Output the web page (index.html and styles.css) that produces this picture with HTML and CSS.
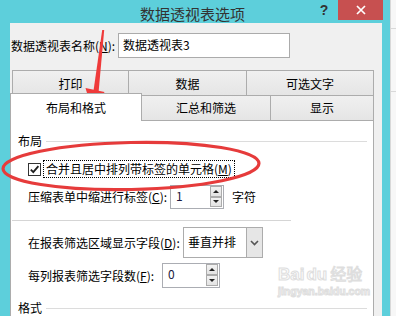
FILE: index.html
```html
<!DOCTYPE html>
<html lang="zh-CN">
<head>
<meta charset="utf-8">
<title>数据透视表选项</title>
<link rel="stylesheet" href="styles.css">
</head>
<body>
<div class="screen">
  <div class="dialog">
    <div class="titlebar">
      <div class="title">数据透视表选项</div>
      <div class="help">?</div>
      <div class="close">
        <svg width="10" height="10" viewBox="0 0 10 10"><path d="M1 1 L9 9 M9 1 L1 9" stroke="#fff" stroke-width="1.7" fill="none"/></svg>
      </div>
    </div>
    <div class="body">
      <div class="name-row">
        <div class="name-lbl">数据透视表名称(<u>N</u>):</div>
        <div class="textbox">数据透视表3</div>
      </div>
      <div class="tabs">
        <div class="tabrow back">
          <div class="tab tb1">打印</div>
          <div class="tab tb2">数据</div>
          <div class="tab tb3">可选文字</div>
        </div>
        <div class="tabrow front">
          <div class="tab tf1 active">布局和格式</div>
          <div class="tab tf2">汇总和筛选</div>
          <div class="tab tf3">显示</div>
        </div>
      </div>
      <div class="panel">
        <div class="group-head"><span>布局</span></div>
        <div class="row check-row">
          <div class="checkbox">
            <svg width="11" height="11" viewBox="0 0 11 11"><path d="M1.8 5.6 L4.3 8.2 L9.4 2.2" stroke="#1e1e1e" stroke-width="1.8" fill="none"/></svg>
          </div>
          <div class="focus-lbl">合并且居中排列带标签的单元格(<u>M</u>)</div>
        </div>
        <div class="row compress-row">
          <div class="lbl lbl-c">压缩表单中缩进行标签(<u>C</u>):</div>
          <div class="spin spin-c">
            <div class="spin-field">1</div>
            <div class="spin-btns">
              <div class="spin-btn"><span class="tri up"></span></div>
              <div class="spin-btn"><span class="tri down"></span></div>
            </div>
          </div>
          <div class="unit">字符</div>
        </div>
        <div class="separator"></div>
        <div class="row filter-row">
          <div class="lbl lbl-d">在报表筛选区域显示字段(<u>D</u>):</div>
          <div class="combo">
            <div class="combo-field">垂直并排</div>
            <div class="combo-btn">
              <svg width="9" height="6" viewBox="0 0 9 6"><path d="M1 1 L4.5 4.5 L8 1" stroke="#555" stroke-width="1.6" fill="none"/></svg>
            </div>
          </div>
        </div>
        <div class="row percol-row">
          <div class="lbl lbl-f">每列报表筛选字段数(<u>F</u>):</div>
          <div class="spin spin-f">
            <div class="spin-field">0</div>
            <div class="spin-btns">
              <div class="spin-btn"><span class="tri up"></span></div>
              <div class="spin-btn"><span class="tri down"></span></div>
            </div>
          </div>
        </div>
        <div class="group-head group-fmt"><span>格式</span></div>
      </div>
    </div>
  </div>
  <div class="behind"></div>

  <div class="watermark">
    <div class="wm-top"><span class="wm-bai">Bai</span><span class="wm-du">du</span><span class="wm-jy">经验</span></div>
    <div class="wm-url">jingyan.baidu.com</div>
  </div>

  <svg class="annot" width="396" height="316" viewBox="0 0 396 316">
    <ellipse cx="131" cy="166" rx="128" ry="23.5" transform="rotate(-1.2 131 166)" fill="none" stroke="#e63b3b" stroke-width="3.2"/>
    <polygon points="102.2,30 104.2,30 98.6,92 93.4,91.5" fill="#ef3a3a"/>
    <polygon points="85.5,88 104.5,92 93.5,115" fill="#ef3a3a"/>
  </svg>
</div>
</body>
</html>
```

FILE: styles.css
```css
* {
  box-sizing: border-box;
  margin: 0;
  padding: 0;
}

html, body {
  width: 396px;
  height: 316px;
  overflow: hidden;
}

body {
  font-family: "Noto Sans CJK SC", "Noto Sans", sans-serif;
  font-size: 12px;
  line-height: 16px;
  color: #000;
  background: #fff;
}

u {
  text-decoration: underline;
  text-underline-offset: 1px;
}

.screen {
  position: relative;
  display: flex;
  width: 396px;
  height: 316px;
}

.dialog {
  width: 390px;
  height: 316px;
  background: #5dcfdb;
  padding: 0 8px 0 10px;
  display: flex;
  flex-direction: column;
}

.behind {
  flex: 1;
  background: #f7f7f7;
  border-left: 1px solid #d8d8d8;
  background-image: linear-gradient(#d9d9d9, #d9d9d9), linear-gradient(#d9d9d9, #d9d9d9);
  background-size: 100% 1px, 100% 1px;
  background-position: 0 28px, 0 91px;
  background-repeat: no-repeat;
}

/* title bar */
.titlebar {
  height: 28px;
  display: flex;
  align-items: flex-start;
}

.title {
  margin-left: 130px;
  margin-top: 5px;
  font-size: 15px;
  line-height: 18px;
  color: #333;
}

.help {
  margin-left: auto;
  margin-top: 3px;
  width: 10px;
  margin-right: 9px;
  text-align: center;
  font-family: "Liberation Sans", sans-serif;
  font-weight: bold;
  font-size: 14px;
  line-height: 14px;
  color: #333;
}

.close {
  width: 45px;
  height: 20px;
  margin-right: -1px;
  background: #c75050;
  display: flex;
  align-items: center;
  justify-content: center;
}

.close svg {
  display: block;
}

/* body */
.body {
  flex: 1;
  background: #f0f0f0;
  display: flex;
  flex-direction: column;
}

.name-row {
  margin-top: 10px;
  height: 25px;
  display: flex;
  align-items: center;
}

.name-lbl {
  width: 108px;
  padding-left: 1px;
  white-space: nowrap;
}

.textbox {
  width: 172px;
  height: 25px;
  border: 1px solid #ababab;
  background: #fff;
  padding-left: 4px;
  line-height: 22px;
}

/* tabs */
.tabs {
  margin-top: 12px;
}

.tabrow {
  display: flex;
  align-items: flex-start;
}

.tabrow.back {
  height: 25px;
  padding-left: 2px;
}

.tabrow.front {
  height: 25px;
}

.tab {
  display: flex;
  align-items: center;
  justify-content: center;
  border: 1px solid #acacac;
  border-bottom: none;
  background: linear-gradient(#f0f0f0, #e5e5e5);
  white-space: nowrap;
}

.back .tab {
  height: 25px;
  padding-top: 1px;
}

.front .tab {
  height: 25px;
}

.tb1 { width: 117px; }
.tb2 { width: 119px; margin-left: -1px; }
.tb3 { width: 128px; margin-left: -1px; }

.tf1 { width: 132px; }
.tf2 { width: 130px; margin-left: -1px; }
.tf3 { width: 104px; margin-left: -1px; }

.front .tab.active {
  position: relative;
  z-index: 1;
  height: 28px;
  margin-top: -2px;
  background: #fff;
}

/* panel */
.panel {
  flex: 1;
  width: 364px;
  background: #fff;
  border: 1px solid #acacac;
  border-bottom: none;
  padding: 0 6px 0 7px;
  display: flex;
  flex-direction: column;
}

.group-head {
  margin-top: 12px;
  height: 16px;
  display: flex;
  align-items: center;
  gap: 4px;
  flex-shrink: 0;
}

.group-head::after {
  content: "";
  flex: 1;
  height: 1px;
  background: #dcdcdc;
}

.group-fmt {
  margin-top: 12px;
}

.row {
  display: flex;
  align-items: center;
  flex-shrink: 0;
  padding-left: 10px;
  white-space: nowrap;
}

.check-row {
  margin-top: 11px;
  height: 18px;
}

.checkbox {
  width: 13px;
  height: 13px;
  border: 1px solid #333;
  background: #fff;
  display: flex;
  align-items: center;
  justify-content: center;
}

.checkbox svg {
  display: block;
}

.focus-lbl {
  margin-left: 2px;
  height: 18px;
  border: 1px dotted #000;
  padding: 0 2px 0 2px;
  line-height: 16px;
}

.compress-row {
  margin-top: 7px;
  height: 24px;
}

.lbl-c { width: 142px; }
.lbl-d { width: 155px; }
.lbl-f { width: 134px; }

.spin {
  display: flex;
  border: 1px solid #abadb3;
  background: #fff;
}

.spin-c {
  width: 54px;
  height: 24px;
}

.spin-f {
  width: 58px;
  height: 25px;
}

.spin-field {
  flex: 1;
  padding-left: 5px;
  line-height: 20px;
  color: #1a1a40;
}

.spin-btns {
  width: 13px;
  display: flex;
  flex-direction: column;
  padding: 0 1px 1px 0;
}

.spin-btn {
  flex: 1;
  border: 1px solid #acacac;
  background: linear-gradient(#f2f2f2, #e3e3e3);
  display: flex;
  align-items: center;
  justify-content: center;
}

.tri {
  width: 0;
  height: 0;
  border-left: 3px solid transparent;
  border-right: 3px solid transparent;
}

.tri.up {
  border-bottom: 3px solid #222;
}

.tri.down {
  border-top: 3px solid #222;
}

.unit {
  margin-left: 8px;
}

.separator {
  flex-shrink: 0;
  margin-top: 11px;
  margin-left: -6px;
  width: 279px;
  height: 1px;
  background: #d5d5d5;
}

.filter-row {
  margin-top: 6px;
  height: 31px;
}

.combo {
  width: 80px;
  height: 31px;
  display: flex;
  border: 1px solid #acacac;
  background: #fff;
}

.combo-field {
  flex: 1;
  padding-left: 4px;
  line-height: 28px;
}

.combo-btn {
  width: 16px;
  border-left: 1px solid #acacac;
  background: #e6e6e6;
  display: flex;
  align-items: center;
  justify-content: center;
}

.combo-btn svg {
  display: block;
}

.percol-row {
  margin-top: 5px;
  height: 25px;
}

/* watermark */
.watermark {
  position: absolute;
  left: 278px;
  top: 261px;
  width: 92px;
  color: #fbfbfb;
  -webkit-text-stroke: 1px #dedede;
  pointer-events: none;
  white-space: nowrap;
}

.wm-top {
  display: flex;
  align-items: baseline;
  height: 24px;
}

.wm-bai, .wm-du {
  font-family: "Liberation Sans", sans-serif;
  font-weight: bold;
  font-size: 17px;
  line-height: 24px;
}

.wm-du {
  margin-left: 2px;
}

.wm-jy {
  margin-left: 3px;
  font-size: 16px;
  line-height: 24px;
}

.wm-url {
  font-family: "Liberation Sans", sans-serif;
  font-weight: bold;
  font-size: 10.5px;
  line-height: 13px;
}

.annot {
  position: absolute;
  left: 0;
  top: 0;
  pointer-events: none;
}
```
